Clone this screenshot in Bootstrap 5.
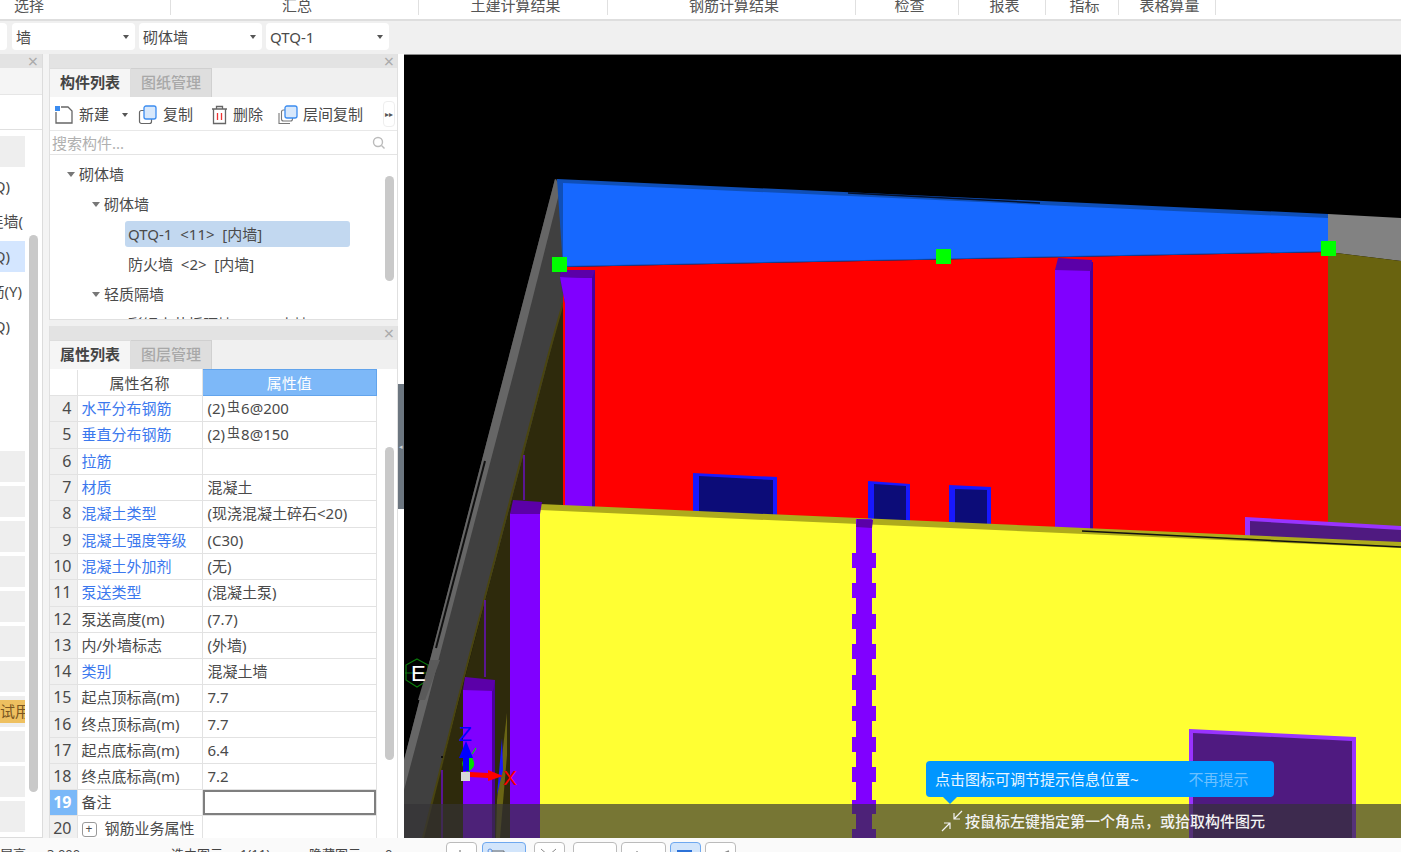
<!DOCTYPE html>
<html lang="zh-CN">
<head>
<meta charset="utf-8">
<title>构件列表</title>
<link href="https://cdn.jsdelivr.net/npm/bootstrap@5.3.0/dist/css/bootstrap.min.css" rel="stylesheet">
<style>
html,body{width:1401px;height:852px;overflow:hidden;margin:0}
body{font-family:"Noto Sans","Noto Sans CJK SC",sans-serif;font-size:15px;color:#4a4a4a;background:#f0f0f0}
.topstrip{height:21px;background:#fff;border-bottom:2px solid #dedede;flex:none}
.topstrip>div{height:15px;line-height:10px;text-align:center;border-right:1px solid #e0e0e0;color:#555;flex:none;padding-left:5px}
.topstrip>div:first-child{text-align:left;padding-left:14px}
.selbar{height:33px;background:#f0f0f0;padding:2px 0 0 12px;gap:4px;flex:none;position:relative}
.sel{width:123px;height:27px;background:#fff;border-radius:4px;padding:0 6px 0 4px;line-height:26px;flex:none}
.sel-stub{width:27px;margin-left:-32px;margin-right:1px}
.caret-d{width:0;height:0;border-left:3px solid transparent;border-right:3px solid transparent;border-top:4px solid #555;flex:none}
.workarea{height:784px;flex:none}
.leftpane{width:43px;background:#fff;border-right:1px solid #dcdcdc;border-bottom:1px solid #dcdcdc;position:relative;overflow:hidden;flex:none}
.gap-a{width:6px;background:#f4f4f4;flex:none}
.midcol{width:349px;gap:6px;flex:none}
.gap-b{width:6px;background:#fff;position:relative;flex:none}
.phead{height:14px;background:#e3e3e3;position:relative;flex:none}
.closex{position:absolute;right:3px;top:-2px;font-size:18px;line-height:18px;color:#aaa}
.leftpane .closex{right:4px}
.lsub{height:27px;background:#f5f5f5;border-bottom:1px solid #e6e6e6;flex:none}
.lblank{height:35px;border-bottom:1px solid #e0e0e0;flex:none}
.lrows{padding-top:6px;gap:4px;width:25px}
.lrow{height:31px;background:#eee;justify-content:flex-end;overflow:hidden;white-space:nowrap;line-height:31px;flex:none}
.lrow.tx{background:transparent}
.lrow.sl{background:#d4e6ff}
.lrow.endq{padding-right:15px}
.lrow.endy{padding-right:3px}
.lrow.endw{padding-right:2px}
.trial{background:#eec060;height:23px;line-height:23px;margin:4px 0;width:100%;text-align:right;color:#7a5520;white-space:nowrap}
.thumb{position:absolute;width:9px;background:#c9c9c9;border-radius:5px}
.th1{left:29px;top:181px;height:557px}
.th2{left:335px;top:122px;height:105px}
.th3{left:335px;top:121px;height:313px}
.pane1{height:266px;background:#fff;border:1px solid #e0e0e0;border-top:0;position:relative;overflow:hidden;flex:none}
.pane2{height:512px;background:#fff;position:relative;overflow:hidden;flex:none;border-left:1px solid #e0e0e0;border-right:1px solid #e0e0e0}
.ptabs{height:29px;background:#f0f0f0;flex:none}
.ptab{width:81px;line-height:27px;text-align:center;font-weight:700;color:#444;background:#f5f5f5;border:1px solid #ddd;border-width:1px 1px 0 0;flex:none}
.ptab.off{background:#dedede;color:#a8a8a8;border-color:#d0d0d0;font-weight:500}
.ptools{height:34px;border-bottom:1px solid #e8e8e8;padding:2px 0 0 4px;position:relative;flex:none}
.tool{flex:none;gap:5px}
.t1{width:84px}.t2{width:73px}.t3{width:67px}.t4{width:105px}
.morebtn{width:12px;height:26px;border:1px solid #eee;border-radius:4px;font-size:8px;line-height:24px;text-align:center;color:#555;position:absolute;left:333px;top:4px}
.psearch{height:24px;border-bottom:1px solid #e4e4e4;padding:1px 11px 0 2px;color:#b0b0b0;flex:none}
.ptree{padding-top:4px;line-height:30px}
.tnode{height:30px;flex:none;white-space:nowrap}
.tl1{padding-left:17px}.tl2{padding-left:42px}.tl3{padding-left:78px}
.tnode .caret-d{margin-right:4px;border-left-width:4px;border-right-width:4px;border-top-width:5px;border-top-color:#777}
.tnode-sel{width:225px;height:26px;line-height:26px;background:#c2d8f0;border-radius:3px;padding-left:3px;margin-left:-3px}
.proptable{width:327px;table-layout:fixed;margin:0;border-collapse:collapse;--bs-table-bg:transparent;color:#4a4a4a}
.proptable td,.proptable th{height:26px;padding:0 4px;border:solid #e2e2e2;border-width:0 1px 1px 0;line-height:24px;font-weight:400;white-space:nowrap;overflow:hidden;color:#4a4a4a}
.proptable td:nth-child(3){padding-left:5px}
.proptable tbody tr:nth-child(2) td,.proptable tbody tr:nth-child(5) td,.proptable tbody tr:nth-child(8) td,.proptable tbody tr:nth-child(12) td{height:27px}
.proptable .cidx{background:#f0f0f0;text-align:right;padding:0 5px 0 0;font-size:16px;width:27px}
.proptable .chead0{background:#fff;width:27px}
.proptable .chead1{text-align:center;width:125px}
.proptable .chead2{background:#7db8f8;color:#fff;text-align:center;border:1px solid #62a4ec}
.proptable .clink{color:#3b78ee}
.proptable .cactive{background:#7ab8f8;color:#fff;font-weight:700}
.proptable .cfocus{box-shadow:inset 0 0 0 2px #7f7f7f}
.rebar{font-size:13px;position:relative;top:-3px;margin:0 1px 0 2px}
.plusbox{display:inline-block;width:15px;height:15px;border:1px solid #999;border-radius:3px;text-align:center;line-height:12px;font-size:12px;margin-right:8px;vertical-align:1px}
.splitter{position:absolute;left:0;top:330px;width:6px;height:125px;background:#6c7680;color:#c9d0d6;font-size:7px;line-height:125px;text-align:center}
.scene{flex:1 1 auto;position:relative;background:#000;border-top:1px solid #8a8a8a;overflow:hidden}
.scene svg{display:block}
.hintbar{position:absolute;left:0;right:0;bottom:0;height:34px;background:rgba(52,50,54,.67);color:#f2f2f2;font-weight:500;padding-left:537px;gap:2px}
.tipbox{position:absolute;left:522px;top:706px;width:348px;height:36px;background:#0096ff;border-radius:4px;color:#eaf6ff;padding:0 0 0 9px}
.tipbox::after{content:"";position:absolute;left:17px;top:36px;border-left:7px solid transparent;border-right:7px solid transparent;border-top:7px solid #0096ff}
.tipmute{margin-left:50px;color:#6cc0ff}
.statusbar{height:14px;background:#fafafa;overflow:hidden;flex:none;font-size:13px;color:#444}
.stxt{flex:none;padding-top:7px;line-height:18px;white-space:nowrap;overflow:hidden}
.sbtn{height:22px;margin-top:4px;background:#fff;border:1px solid #bbb;border-radius:4px 4px 0 0;flex:none;padding:1px 0 0 3px}
.sbtn.on{background:#d2e5fb;border-color:#6ea8ef}
.w31{width:31px}.w44{width:44px}.w45{width:45px}
.ml4{margin-left:4px}.ml5{margin-left:5px}.ml8{margin-left:8px}
</style>
</head>
<body class="d-flex flex-column">
<div class="topstrip d-flex">
  <div style="width:171px">选择</div><div style="width:248px">汇总</div><div style="width:189px">土建计算结果</div><div style="width:248px">钢筋计算结果</div><div style="width:103px">检查</div><div style="width:87px">报表</div><div style="width:73px">指标</div><div style="width:97px">表格算量</div>
</div>
<div class="selbar d-flex">
  <div class="sel sel-stub d-flex align-items-center justify-content-end"></div>
  <div class="sel d-flex align-items-center justify-content-between"><span>墙</span><i class="caret-d"></i></div>
  <div class="sel d-flex align-items-center justify-content-between"><span>砌体墙</span><i class="caret-d"></i></div>
  <div class="sel d-flex align-items-center justify-content-between"><span>QTQ-1</span><i class="caret-d"></i></div>
</div>
<div class="workarea d-flex">
  <div class="leftpane d-flex flex-column">
    <div class="phead"><span class="closex">×</span></div>
    <div class="lsub"></div>
    <div class="lblank"></div>
    <div class="lrows d-flex flex-column">
      <div class="lrow d-flex"></div>
      <div class="lrow tx endq d-flex">(Q)</div>
      <div class="lrow tx endw d-flex">连墙(</div>
      <div class="lrow sl endq d-flex">(Q)</div>
      <div class="lrow tx endy d-flex">筋(Y)</div>
      <div class="lrow tx endq d-flex">(Q)</div>
      <div class="lrow tx d-flex"></div>
      <div class="lrow tx d-flex"></div>
      <div class="lrow tx d-flex"></div>
      <div class="lrow d-flex"></div>
      <div class="lrow d-flex"></div>
      <div class="lrow d-flex"></div>
      <div class="lrow d-flex"></div>
      <div class="lrow d-flex"></div>
      <div class="lrow d-flex"></div>
      <div class="lrow d-flex"></div>
      <div class="lrow d-flex"><div class="trial">试用</div></div>
      <div class="lrow d-flex"></div>
      <div class="lrow d-flex"></div>
      <div class="lrow d-flex"></div>
    </div>
    <div class="thumb th1"></div>
  </div>
  <div class="gap-a"></div>
  <div class="midcol d-flex flex-column">
    <div class="pane1 d-flex flex-column">
      <div class="phead"><span class="closex">×</span></div>
      <div class="ptabs d-flex"><div class="ptab">构件列表</div><div class="ptab off">图纸管理</div></div>
      <div class="ptools d-flex align-items-center">
        <div class="tool t1 d-flex align-items-center">
          <svg width="20" height="20" viewBox="0 0 20 20"><path d="M2 7V18H18V6L14 2H7" fill="none" stroke="#666" stroke-width="1.3"/><rect x="1" y="1" width="5" height="5" fill="#3b8cf0"/></svg>
          <span>新建</span><i class="caret-d ms-2"></i>
        </div>
        <div class="tool t2 d-flex align-items-center">
          <svg width="20" height="20" viewBox="0 0 20 20"><rect x="1.500" y="5.500" width="12" height="13" rx="2" fill="#fff" stroke="#666" stroke-width="1.200"/><rect x="6" y="1" width="12" height="13" rx="2" fill="#d8e8fb" stroke="#3b8cf0" stroke-width="1.300"/></svg>
          <span>复制</span>
        </div>
        <div class="tool t3 d-flex align-items-center">
          <svg width="17" height="20" viewBox="0 0 17 20"><path d="M1 4H16M5.500 4V1.500H11.500V4M2.500 4V18.500H14.500V4" fill="none" stroke="#666" stroke-width="1.300"/><path d="M6.500 8V15M10.500 8V15" stroke="#e33" stroke-width="1.300"/></svg>
          <span>删除</span>
        </div>
        <div class="tool t4 d-flex align-items-center">
          <svg width="20" height="20" viewBox="0 0 20 20"><path d="M1 8V18.500H12" fill="none" stroke="#777" stroke-width="1.100"/><rect x="3.500" y="5" width="11" height="11" rx="2" fill="#fff" stroke="#777" stroke-width="1.100"/><rect x="7" y="1" width="12" height="12" rx="2" fill="#d8e8fb" stroke="#3b8cf0" stroke-width="1.300"/></svg>
          <span>层间复制</span>
        </div>
        <div class="morebtn">▸▸</div>
      </div>
      <div class="psearch d-flex align-items-center justify-content-between">
        <span>搜索构件...</span>
        <svg width="14" height="14" viewBox="0 0 14 14"><circle cx="6" cy="6" r="4.500" fill="none" stroke="#bbb" stroke-width="1.400"/><path d="M9.500 9.500L12.500 12.500" stroke="#bbb" stroke-width="1.400"/></svg>
      </div>
      <div class="ptree d-flex flex-column">
        <div class="tnode tl1 d-flex align-items-center"><i class="caret-d"></i>砌体墙</div>
        <div class="tnode tl2 d-flex align-items-center"><i class="caret-d"></i>砌体墙</div>
        <div class="tnode tl3 d-flex align-items-center"><div class="tnode-sel">QTQ-1&nbsp; &lt;11&gt;&nbsp; [内墙]</div></div>
        <div class="tnode tl3 d-flex align-items-center">防火墙&nbsp; &lt;2&gt;&nbsp; [内墙]</div>
        <div class="tnode tl2 d-flex align-items-center"><i class="caret-d"></i>轻质隔墙</div>
        <div class="tnode tl3 d-flex align-items-center">彩钢夹芯板隔墙&nbsp; &lt;5&gt;&nbsp; [内墙]</div>
      </div>
      <div class="thumb th2"></div>
    </div>
    <div class="pane2 d-flex flex-column">
      <div class="phead"><span class="closex">×</span></div>
      <div class="ptabs d-flex"><div class="ptab">属性列表</div><div class="ptab off">图层管理</div></div>
      <table class="table proptable">
        <thead><tr><th class="chead0"></th><th class="chead1">属性名称</th><th class="chead2">属性值</th></tr></thead>
        <tbody>
          <tr><td class="cidx">4</td><td class="clink">水平分布钢筋</td><td>(2)<span class="rebar">虫</span>6@200</td></tr>
          <tr><td class="cidx">5</td><td class="clink">垂直分布钢筋</td><td>(2)<span class="rebar">虫</span>8@150</td></tr>
          <tr><td class="cidx">6</td><td class="clink">拉筋</td><td></td></tr>
          <tr><td class="cidx">7</td><td class="clink">材质</td><td>混凝土</td></tr>
          <tr><td class="cidx">8</td><td class="clink">混凝土类型</td><td>(现浇混凝土碎石&lt;20)</td></tr>
          <tr><td class="cidx">9</td><td class="clink">混凝土强度等级</td><td>(C30)</td></tr>
          <tr><td class="cidx">10</td><td class="clink">混凝土外加剂</td><td>(无)</td></tr>
          <tr><td class="cidx">11</td><td class="clink">泵送类型</td><td>(混凝土泵)</td></tr>
          <tr><td class="cidx">12</td><td>泵送高度(m)</td><td>(7.7)</td></tr>
          <tr><td class="cidx">13</td><td>内/外墙标志</td><td>(外墙)</td></tr>
          <tr><td class="cidx">14</td><td class="clink">类别</td><td>混凝土墙</td></tr>
          <tr><td class="cidx">15</td><td>起点顶标高(m)</td><td>7.7</td></tr>
          <tr><td class="cidx">16</td><td>终点顶标高(m)</td><td>7.7</td></tr>
          <tr><td class="cidx">17</td><td>起点底标高(m)</td><td>6.4</td></tr>
          <tr><td class="cidx">18</td><td>终点底标高(m)</td><td>7.2</td></tr>
          <tr><td class="cidx cactive">19</td><td>备注</td><td class="cfocus"></td></tr>
          <tr><td class="cidx">20</td><td><span class="plusbox">+</span>钢筋业务属性</td><td></td></tr>
        </tbody>
      </table>
      <div class="thumb th3"></div>
    </div>
  </div>
  <div class="gap-b"><div class="splitter">◂</div></div>
  <div class="scene">
    <svg width="997" height="783" viewBox="404 55 997 783">
      <rect x="404" y="55" width="997" height="783" fill="#000"/>
      <polygon points="555,179 566,182 566,303 458,700 423,838 404,838 404,760" fill="#404040"/>
      <polygon points="555,179 561,186 517,360 428,700 404,790 404,760" fill="#666"/>
      <polygon points="563,303 570,303 570,520 510,520 510,838 423,838" fill="#2e2a0c"/>
      <polyline points="563,303 547,360 458,700 423,838" fill="none" stroke="#4a4510" stroke-width="2"/>
      <polygon points="563,267 1328,252 1328,540 563,540" fill="#ff0000"/>
      <polygon points="693,473 777,477 777,525 693,525" fill="#1818ff"/>
      <polygon points="699,476 773,480 773,525 699,525" fill="#0c0c78"/>
      <polygon points="868,481 910,484 910,530 868,530" fill="#1818ff"/>
      <polygon points="874,484 906,486 906,530 874,530" fill="#0c0c78"/>
      <polygon points="949,485 991,487 991,535 949,535" fill="#1818ff"/>
      <polygon points="955,489 987,490 987,535 955,535" fill="#0c0c78"/>
      <polygon points="557,179 1328,214 1328,252 563,267" fill="#0f4fb8"/>
      <polygon points="563,183 1328,218 1328,251 563,266" fill="#1668ff"/>
      <path d="M848,193L1040,203" stroke="#04122e" stroke-width="1.500"/>
      <polygon points="1328,214 1401,218 1401,261 1328,252" fill="#828282"/>
      <polygon points="1328,252 1401,261 1401,560 1328,540" fill="#69630f"/>
      <polygon points="561,270 595,270 595,510 565,510 565,303 560,278" fill="#4a0099"/>
      <polygon points="560,277 592,278 592,510 565,510 565,303" fill="#8000ff"/>
      <polygon points="561,270 595,270 592,278 560,277" fill="#5b00a8"/>
      <rect x="1090" y="262" width="3" height="268" fill="#4a0099"/>
      <rect x="1055" y="270" width="35" height="260" fill="#8000ff"/>
      <polygon points="1058,258 1092,260 1091,271 1055,270" fill="#5b00a8"/>
      <polygon points="1245,517 1401,526 1401,560 1245,560" fill="#9933ff"/>
      <polygon points="1250,521 1401,530 1401,560 1250,560" fill="#4f1a80"/>
      <polygon points="540,504 1401,542 1401,560 540,520" fill="#aeab1c"/>
      <polygon points="540,510 1401,548 1401,838 540,838" fill="#ffff33"/>
      <path d="M1082,531L1401,547" stroke="#111" stroke-width="1.500"/>
      <path d="M524,455V500" stroke="#6a10c0" stroke-width="1.500"/>
      <path d="M485,600V677" stroke="#6a10c0" stroke-width="1.500"/>
      <path d="M442,770V838" stroke="#6a10c0" stroke-width="1.500"/>
      <circle cx="442" cy="757" r="1" fill="#000"/>
      <rect x="510" y="513" width="30" height="325" fill="#8000ff"/>
      <polygon points="513,500 542,502 540,514 510,514" fill="#5b00a8"/>
      <rect x="492" y="680" width="3" height="158" fill="#4a0099"/>
      <rect x="463" y="690" width="29" height="148" fill="#8000ff"/>
      <polygon points="465,677 495,680 493,691 463,690" fill="#5b00a8"/>
      <polygon points="507,713 507,755 500,838 496,838 497,800" fill="#6a6514"/>
      <polygon points="502,738 503,770 497,795" fill="#1818ff"/>
      <path d="M485,461L436,648" stroke="#111" stroke-width="2"/>
      <rect x="856" y="519" width="16" height="319" fill="#8000ff"/>
      <polygon points="857,519 873,520 872,528 856,527" fill="#5b00a8"/>
      <g fill="#8000ff">
        <rect x="852" y="553" width="24" height="15"/><rect x="852" y="583" width="24" height="15"/><rect x="852" y="614" width="24" height="15"/><rect x="852" y="644" width="24" height="15"/><rect x="852" y="675" width="24" height="15"/><rect x="852" y="706" width="24" height="15"/><rect x="852" y="737" width="24" height="15"/><rect x="852" y="767" width="24" height="15"/><rect x="852" y="800" width="24" height="14"/><rect x="852" y="829" width="24" height="9"/>
      </g>
      <polygon points="1189,729 1356,737 1356,838 1189,838" fill="#9933ff"/>
      <polygon points="1193,733 1352,741 1352,838 1193,838" fill="#4f1a80"/>
      <rect x="552" y="257" width="15" height="15" fill="#00ff00"/>
      <rect x="936" y="249" width="15" height="15" fill="#00ff00"/>
      <rect x="1321" y="241" width="15" height="15" fill="#00ff00"/>
      <polygon points="417,659 428,665 428,680 417,687 406,680 406,665" fill="none" stroke="#0a7a0a" stroke-width="1.200"/>
      <path d="M405,673H430" stroke="#0a7a0a" stroke-width="1"/>
      <polygon points="430,660 440,660 425,700 418,700" fill="#5a5a5a"/>
      <text x="411" y="681" fill="#fff" font-family="Liberation Sans" font-size="22">E</text>
      <path d="M467,772C459,765 462,758 470,755C476,762 476,768 467,772Z" fill="#00e000"/>
      <path d="M472,754L476,748" stroke="#00e000" stroke-width="1.200"/>
      <polygon points="466,741 473,758 469,758 469,771 463,771 463,758 459,758" fill="#0000ff"/>
      <text x="459" y="741" fill="#0000ff" font-family="Liberation Sans" font-size="21">Z</text>
      <polygon points="470,772 488,773 488,770 503,776 488,781 488,778 470,777" fill="#ff0000"/>
      <rect x="461" y="772" width="9" height="9" fill="#d8d8d8"/>
      <text x="503" y="785" fill="#ff0000" font-family="Liberation Sans" font-size="21">X</text>
    </svg>
    <div class="tipbox d-flex align-items-center"><span>点击图标可调节提示信息位置~</span><span class="tipmute">不再提示</span></div>
    <div class="hintbar d-flex align-items-center">
      <svg width="22" height="22" viewBox="0 0 22 22"><path d="M1 21L9 13M3 13H9V19M21 1L13 9M13 3V9H19" fill="none" stroke="#f2f2f2" stroke-width="1.200"/></svg>
      <span>按鼠标左键指定第一个角点&#65292;或拾取构件图元</span>
    </div>
  </div>
</div>
<div class="statusbar d-flex">
  <span class="stxt" style="width:47px">层高:</span><span class="stxt" style="width:124px">3.000</span><span class="stxt" style="width:69px">选中图元:</span><span class="stxt" style="width:69px">1(11)</span><span class="stxt" style="width:76px">隐藏图元:</span><span class="stxt" style="width:61px">0</span>
  <div class="sbtn w31"><svg width="20" height="14" viewBox="0 0 20 14"><path d="M10 2V14" stroke="#666"/></svg></div>
  <div class="sbtn on w44 ml5"><svg width="30" height="14" viewBox="0 0 30 14"><circle cx="4" cy="3" r="2" fill="none" stroke="#5a90e0"/><path d="M6 3H18V14" fill="none" stroke="#666"/></svg></div>
  <div class="sbtn w31 ml8"><svg width="22" height="14" viewBox="0 0 22 14"><path d="M3 1L18 14M18 1L3 14" stroke="#888"/></svg></div>
  <div class="sbtn w44 ml8"><svg width="30" height="14" viewBox="0 0 30 14"><path d="M14 14L20 6" stroke="#666"/></svg></div>
  <div class="sbtn w45 ml4"><svg width="30" height="14" viewBox="0 0 30 14"><path d="M12 3V14" stroke="#666"/></svg></div>
  <div class="sbtn on w31 ml4"><svg width="22" height="14" viewBox="0 0 22 14"><rect x="3" y="2" width="15" height="12" fill="#2c72d8"/><rect x="6" y="5" width="9" height="3" fill="#cfe2fa"/></svg></div>
  <div class="sbtn w31 ml4"><svg width="22" height="14" viewBox="0 0 22 14"><path d="M3 10L20 3" stroke="#888" stroke-width="1.500"/><path d="M3 10V14" stroke="#888"/></svg></div>
</div>
</body>
</html>
